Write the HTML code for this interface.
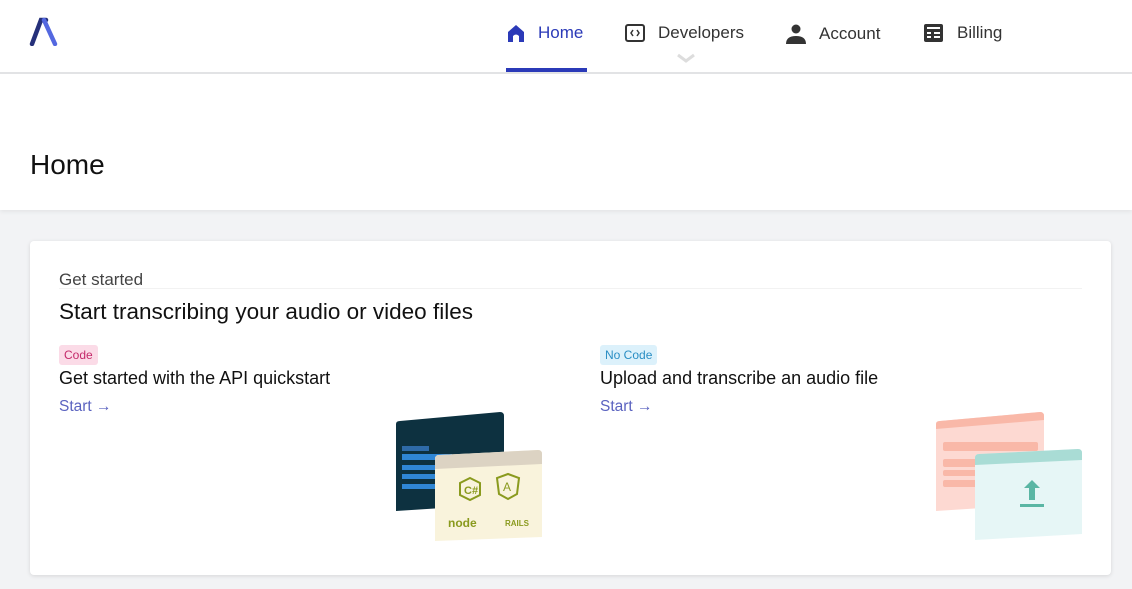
<!DOCTYPE html>
<html><head><meta charset="utf-8"><style>
*{margin:0;padding:0;box-sizing:border-box}
body{width:1132px;height:589px;overflow:hidden;background:#f2f3f5;font-family:"Liberation Sans",sans-serif;position:relative;color:#111}
.top{position:absolute;left:0;top:0;width:1132px;height:210px;background:#fff;box-shadow:0 2px 4px rgba(0,0,0,.06)}
.nav{position:absolute;top:0;left:0;width:1132px;height:74px;border-bottom:2px solid #e2e3e5}
.ni{position:absolute;top:23px;font-size:17px;color:#333;display:flex;align-items:center;gap:12px}
.card{position:absolute;left:30px;top:241px;width:1081px;height:334px;background:#fff;border-radius:4px;box-shadow:0 1px 4px rgba(0,0,0,.12)}
.t{position:absolute;white-space:nowrap}
.badge{position:absolute;font-size:12px;padding:3px 5px;border-radius:3px}
.start{position:absolute;font-size:15.5px;color:#5b63c0}
</style></head><body>
<div class="top">
<div class="nav">
<svg style="position:absolute;left:29px;top:17px" width="30" height="29" viewBox="0 0 30 29"><path d="M3 27 L12 3 L17 3" stroke="#25307a" stroke-width="4.5" fill="none" stroke-linecap="round"/><path d="M15 3 L26 27" stroke="#5468e0" stroke-width="4.5" fill="none" stroke-linecap="round"/></svg>
<div class="ni" style="left:506px;color:#2b3ab8"><svg width="20" height="20" viewBox="0 0 20 20"><path d="M2 19V9L10 2L18 9V19H13V13Q10 10 7 13V19Z" fill="#2b3ab8"/></svg>Home</div>
<div style="position:absolute;left:506px;top:68px;width:81px;height:4px;background:#2b3ab8"></div>
<div class="ni" style="left:624px"><svg width="22" height="20" viewBox="0 0 22 20"><rect x="2" y="2" width="18" height="16" rx="2" fill="none" stroke="#333" stroke-width="2"/><path d="M9 7L7 10L9 13M13 7L15 10L13 13" stroke="#333" stroke-width="1.5" fill="none"/></svg>Developers</div>
<svg style="position:absolute;left:676px;top:53px" width="20" height="10"><path d="M2 2L10 8L18 2" stroke="#ddd" stroke-width="3" fill="none"/></svg>
<div class="ni" style="left:785px"><svg width="22" height="22" viewBox="0 0 22 22"><circle cx="11" cy="6" r="4.5" fill="#333"/><path d="M1 21Q1 13 11 13Q21 13 21 21Z" fill="#333"/></svg>Account</div>
<div class="ni" style="left:923px"><svg width="22" height="20" viewBox="0 0 22 20"><rect x="1" y="1" width="19" height="18" rx="2" fill="#333"/><path d="M4 5H17M4 10H8M11 10H17M4 14H8M11 14H17" stroke="#fff" stroke-width="2"/></svg>Billing</div>
</div>
<div class="t" style="left:30px;top:149px;font-size:28px;color:#111">Home</div>
</div>
<div class="card">
<div class="t" style="left:29px;top:29px;font-size:17px;color:#444">Get started</div>
<div style="position:absolute;left:29px;right:29px;top:47px;height:1px;background:#f2f2f2"></div>
<div class="t" style="left:29px;top:58px;font-size:22.5px;color:#111">Start transcribing your audio or video files</div>
<div class="badge" style="left:29px;top:104px;background:#fbdbe7;color:#c42a6a">Code</div>
<div class="t" style="left:29px;top:127px;font-size:18px">Get started with the API quickstart</div>
<div class="start" style="left:29px;top:157px">Start →</div>
<div class="badge" style="left:570px;top:104px;background:#dcf1fb;color:#2a8ec4">No Code</div>
<div class="t" style="left:570px;top:127px;font-size:18px">Upload and transcribe an audio file</div>
<div class="start" style="left:570px;top:157px">Start →</div>
<svg style="position:absolute;left:362px;top:168px" width="155" height="135" viewBox="0 0 155 135">
<path d="M4 15 Q4 12 8 12 L108 3 Q112 3 112 7 L112 95 L4 102Z" fill="#0d3140"/>
<rect x="10" y="37" width="27" height="5" fill="#2e6aa7"/><rect x="10" y="45" width="50" height="6" fill="#2f86d5"/><rect x="10" y="56" width="50" height="5" fill="#2f86d5"/><rect x="10" y="65" width="50" height="5" fill="#2f86d5"/><rect x="10" y="75" width="50" height="5" fill="#2f86d5"/>
<path d="M43 50 Q43 46 47 46 L146 41 Q150 41 150 45 L150 128 L43 132Z" fill="#f9f3dc"/>
<path d="M43 50 Q43 46 47 46 L146 41 Q150 41 150 45 L150 55 L43 60Z" fill="#dcd3c3"/>
<path d="M78 69l10 5v12l-10 5-10-5V74z" fill="none" stroke="#8a9a1e" stroke-width="2"/><text x="72" y="85" font-size="11" fill="#8a9a1e" font-family="Liberation Sans" font-weight="bold">C#</text>
<path d="M116 65l11 4-2 16-9 5-9-5-2-16z" fill="none" stroke="#8a9a1e" stroke-width="2"/><text x="111" y="82" font-size="12" fill="#8a9a1e" font-family="Liberation Sans">A</text>
<text x="56" y="118" font-size="12" fill="#8a9a1e" font-family="Liberation Sans" font-weight="bold">node</text>
<text x="113" y="117" font-size="8" fill="#8a9a1e" font-family="Liberation Sans" font-weight="bold">RAILS</text>
</svg>
<svg style="position:absolute;left:903px;top:168px" width="155" height="135" viewBox="0 0 155 135">
<path d="M3 15 Q3 12 7 12 L107 3 Q111 3 111 7 L111 95 L3 102Z" fill="#fdd9d2"/>
<path d="M3 15 Q3 12 7 12 L107 3 Q111 3 111 7 L111 11 L3 20Z" fill="#f9b8a8"/>
<rect x="10" y="33" width="95" height="9" rx="2" fill="#f9b8a8"/><rect x="10" y="50" width="40" height="8" rx="2" fill="#f9b8a8"/><rect x="10" y="61" width="40" height="6" rx="2" fill="#f9b8a8"/><rect x="10" y="71" width="40" height="7" rx="2" fill="#f9b8a8"/>
<path d="M42 49 Q42 45 46 45 L145 40 Q149 40 149 44 L149 125 L42 131Z" fill="#e6f6f6"/>
<path d="M42 49 Q42 45 46 45 L145 40 Q149 40 149 44 L149 51 L42 56Z" fill="#a9dcd5"/>
<path d="M99 71 L91 79 H96 V91 H102 V79 H107Z" fill="#5ab6a4"/><rect x="87" y="95" width="24" height="3" fill="#5ab6a4"/>
</svg>
</div>
</body></html>
